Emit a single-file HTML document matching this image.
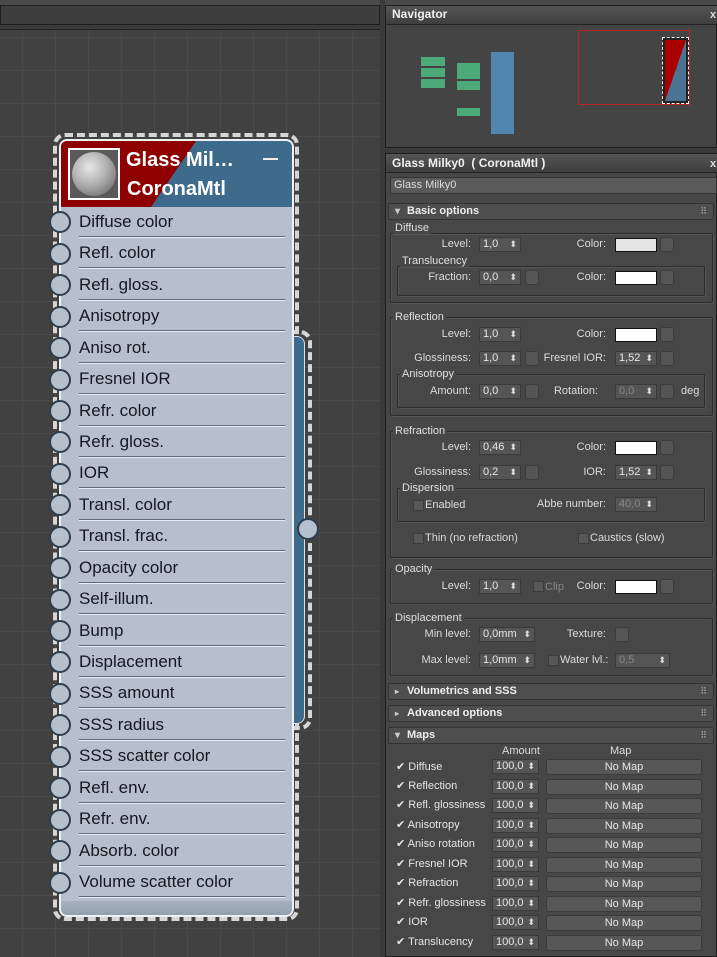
<!DOCTYPE html>
<html><head><meta charset="utf-8"><style>
*{margin:0;padding:0;box-sizing:border-box}
body{width:717px;height:957px;overflow:hidden;background:#3a3a3a;font-family:"Liberation Sans",Arial,sans-serif;position:relative}
.a{position:absolute}
.canvas{left:0;top:29px;width:380px;height:928px;background-color:#414141;border-top:1px solid #222;
background-image:linear-gradient(to right,#4a4a4a 1px,transparent 1px),linear-gradient(to bottom,#4a4a4a 1px,transparent 1px);
background-size:33px 33px;background-position:22px 7px}
.row{position:absolute;left:60px;width:232px;height:31px}
.row span{position:absolute;left:19px;top:5px;font-size:17px;color:#141820;line-height:20px}
.row i{position:absolute;left:19px;right:7px;bottom:0;height:2px;background:#5e6a78;border-bottom:1px solid #e8eef4}
.dot{position:absolute;width:22px;height:22px;border-radius:50%;background:#b4c0cc;border:2px solid #2e3e4e}
.t{position:absolute;font-size:11px;color:#dcdcdc;line-height:13px;white-space:nowrap}
.r{text-align:right}
.gb{position:absolute;border:1px solid #2c2c2c;box-shadow:inset 1px 1px 0 #555,1px 1px 0 #555;border-radius:2px}
.lg{position:absolute;font-size:11px;color:#e0e0e0;background:#474747;padding:0 2px;line-height:12px}
.sp{position:absolute;height:15px;background:#555;border:1px solid #3a3a3a;font-size:11px;color:#e6e6e6;line-height:13px;padding-left:3px}
.sp:after{content:"⬍";position:absolute;right:3px;top:0;font-size:9px;color:#ddd}
.dis{color:#888}
.sw{position:absolute;width:42px;height:14px;background:#fff;border:1px solid #111}
.bt{position:absolute;width:14px;height:15px;background:#555;border:1px solid #3c3c3c;border-radius:3px}
.cb{position:absolute;width:11px;height:11px;background:#575757;border:1px solid #3c3c3c}
.rh{position:absolute;left:388px;width:326px;height:17px;background:#4e4e4e;border:1px solid #333;border-radius:2px;font-size:11px;font-weight:bold;color:#eee;line-height:15px;padding-left:18px}
.rh:before{position:absolute;left:6px;font-size:8px;color:#ccc}
.rh.c:before{content:"▸"}
.rh.o:before{content:"▾";font-size:10px}
.rh:after{content:"⠿";position:absolute;right:6px;font-size:9px;color:#aaa;font-weight:normal}
.mb{position:absolute;left:546px;width:156px;height:16px;background:#575757;border:1px solid #3b3b3b;border-radius:3px;font-size:11px;color:#e6e6e6;text-align:center;line-height:14px}
.ck{position:absolute;left:396px;font-size:11px;color:#e6e6e6;line-height:13px}
</style></head><body>
<div class="a" style="left:0;top:0;width:717px;height:5px;background:#4a4a4a"></div>
<div class="a" style="left:0;top:5px;width:380px;height:20px;background:#3e3e3e;border:1px solid #1e1e1e"></div>
<div class="a canvas"></div>
<div class="a" style="left:380px;top:0;width:5px;height:957px;background:#3a3a3a"></div>

<!-- node -->
<div class="a" style="left:53px;top:133px;width:246px;height:788px;border:4px dashed #d6d6d6;border-radius:12px"></div>
<div class="a" style="left:290px;top:330px;width:22px;height:400px;border:4px dashed #d6d6d6;border-left:none;border-radius:0 12px 12px 0"></div>
<div class="a" style="left:293px;top:336px;width:12px;height:388px;background:#3e6a8c;border:1px solid #dde;border-left:none;border-radius:0 8px 8px 0"></div>
<div class="dot" style="left:297px;top:518px"></div>
<div class="a" style="left:59px;top:139px;width:235px;height:778px;background:#b6c0cc;border:2px solid #eef2f6;border-radius:8px;overflow:hidden">
 <div class="a" style="left:0;top:0;width:235px;height:66px;background:#3e6a8c"></div>
 <div class="a" style="left:0;top:0;width:235px;height:66px;background:#8e0000;clip-path:polygon(0 0,135px 0,90px 66px,0 66px)"></div>
 <div class="a" style="left:7px;top:7px;width:52px;height:52px;background:#fff;padding:2px"><div style="width:48px;height:48px;background:#5a5a5a;display:flex;align-items:center;justify-content:center"><div style="width:44px;height:44px;border-radius:50%;background:radial-gradient(circle at 40% 35%,#e8e8e8,#b0b0b0 45%,#777 80%,#555)"></div></div></div>
 <div class="a" style="left:65px;top:8px;font-size:20px;font-weight:bold;color:#fff">Glass Mil…</div>
 <div class="a" style="left:66px;top:37px;font-size:20px;font-weight:bold;color:#fff">CoronaMtl</div>
 <div class="a" style="left:202px;top:17px;width:15px;height:2px;background:#eee"></div>
 <div class="a" style="left:0;bottom:0;width:235px;height:14px;background:linear-gradient(#a8b2be,#94a0ae)"></div>
</div>
<div class="row" style="top:207px"><span>Diffuse color</span><i></i></div>
<div class="row" style="top:238px"><span>Refl. color</span><i></i></div>
<div class="row" style="top:270px"><span>Refl. gloss.</span><i></i></div>
<div class="row" style="top:301px"><span>Anisotropy</span><i></i></div>
<div class="row" style="top:333px"><span>Aniso rot.</span><i></i></div>
<div class="row" style="top:364px"><span>Fresnel IOR</span><i></i></div>
<div class="row" style="top:396px"><span>Refr. color</span><i></i></div>
<div class="row" style="top:427px"><span>Refr. gloss.</span><i></i></div>
<div class="row" style="top:458px"><span>IOR</span><i></i></div>
<div class="row" style="top:490px"><span>Transl. color</span><i></i></div>
<div class="row" style="top:521px"><span>Transl. frac.</span><i></i></div>
<div class="row" style="top:553px"><span>Opacity color</span><i></i></div>
<div class="row" style="top:584px"><span>Self-illum.</span><i></i></div>
<div class="row" style="top:616px"><span>Bump</span><i></i></div>
<div class="row" style="top:647px"><span>Displacement</span><i></i></div>
<div class="row" style="top:678px"><span>SSS amount</span><i></i></div>
<div class="row" style="top:710px"><span>SSS radius</span><i></i></div>
<div class="row" style="top:741px"><span>SSS scatter color</span><i></i></div>
<div class="row" style="top:773px"><span>Refl. env.</span><i></i></div>
<div class="row" style="top:804px"><span>Refr. env.</span><i></i></div>
<div class="row" style="top:836px"><span>Absorb. color</span><i></i></div>
<div class="row" style="top:867px"><span>Volume scatter color</span><i></i></div>
<div class="dot" style="left:49px;top:211px"></div><div class="dot" style="left:49px;top:243px"></div>
<div class="dot" style="left:49px;top:274px"></div><div class="dot" style="left:49px;top:306px"></div>
<div class="dot" style="left:49px;top:337px"></div><div class="dot" style="left:49px;top:369px"></div>
<div class="dot" style="left:49px;top:400px"></div><div class="dot" style="left:49px;top:431px"></div>
<div class="dot" style="left:49px;top:463px"></div><div class="dot" style="left:49px;top:494px"></div>
<div class="dot" style="left:49px;top:526px"></div><div class="dot" style="left:49px;top:557px"></div>
<div class="dot" style="left:49px;top:589px"></div><div class="dot" style="left:49px;top:620px"></div>
<div class="dot" style="left:49px;top:651px"></div><div class="dot" style="left:49px;top:683px"></div>
<div class="dot" style="left:49px;top:714px"></div><div class="dot" style="left:49px;top:746px"></div>
<div class="dot" style="left:49px;top:777px"></div><div class="dot" style="left:49px;top:809px"></div>
<div class="dot" style="left:49px;top:840px"></div><div class="dot" style="left:49px;top:872px"></div>

<!-- navigator -->
<div class="a" style="left:385px;top:5px;width:332px;height:143px;background:#444;border:1px solid #1e1e1e"></div>
<div class="a" style="left:386px;top:6px;width:331px;height:19px;background:linear-gradient(#555,#3e3e3e);border-bottom:1px solid #222"></div>
<div class="t" style="left:392px;top:8px;font-size:12px;font-weight:bold;color:#f0f0f0">Navigator</div>
<div class="t" style="left:710px;top:9px;font-weight:bold">x</div>
<div class="a" style="left:421px;top:57px;width:24px;height:9px;background:#4caa78"></div>
<div class="a" style="left:421px;top:68px;width:24px;height:9px;background:#4caa78"></div>
<div class="a" style="left:421px;top:79px;width:24px;height:9px;background:#4caa78"></div>
<div class="a" style="left:457px;top:63px;width:23px;height:16px;background:#4caa78"></div>
<div class="a" style="left:457px;top:81px;width:23px;height:9px;background:#4caa78"></div>
<div class="a" style="left:457px;top:108px;width:23px;height:8px;background:#4caa78"></div>
<div class="a" style="left:491px;top:52px;width:23px;height:82px;background:#5186b0"></div>
<div class="a" style="left:578px;top:30px;width:112px;height:75px;border:1px solid #b22"></div>
<div class="a" style="left:662px;top:37px;width:27px;height:67px;border:1px dashed #fff;padding:2px;background:#222"><div style="width:100%;height:100%;background:linear-gradient(to bottom right,#a00 0,#a00 50%,#4a7394 50%)"></div></div>

<!-- material panel -->
<div class="a" style="left:385px;top:153px;width:332px;height:804px;background:#474747;border:1px solid #1e1e1e"></div>
<div class="a" style="left:386px;top:154px;width:331px;height:19px;background:linear-gradient(#555,#3e3e3e);border-bottom:1px solid #222"></div>
<div class="t" style="left:392px;top:157px;font-size:12px;font-weight:bold;color:#f0f0f0">Glass Milky0 &nbsp;( CoronaMtl )</div>
<div class="t" style="left:710px;top:158px;font-weight:bold">x</div>
<div class="a" style="left:390px;top:177px;width:327px;height:17px;background:#5a5a5a;border:1px solid #333"></div>
<div class="t" style="left:394px;top:179px">Glass Milky0</div>
<div class="rh o" style="top:203px">Basic options</div>

<!-- Diffuse -->
<div class="gb" style="left:390px;top:233px;width:323px;height:70px"></div>
<div class="lg" style="left:393px;top:222px">Diffuse</div>
<div class="t r" style="left:400px;top:238px;width:71px">Level:</div>
<div class="sp" style="left:479px;top:237px;width:42px">1,0</div>
<div class="t r" style="left:540px;top:238px;width:66px">Color:</div>
<div class="sw" style="left:615px;top:238px;background:#e4e4e4"></div><div class="bt" style="left:660px;top:237px"></div>
<div class="gb" style="left:397px;top:266px;width:308px;height:30px"></div>
<div class="lg" style="left:400px;top:255px">Translucency</div>
<div class="t r" style="left:400px;top:271px;width:71px">Fraction:</div>
<div class="sp" style="left:479px;top:270px;width:42px">0,0</div><div class="bt" style="left:525px;top:270px"></div>
<div class="t r" style="left:540px;top:271px;width:66px">Color:</div>
<div class="sw" style="left:615px;top:271px"></div><div class="bt" style="left:660px;top:270px"></div>

<!-- Reflection -->
<div class="gb" style="left:390px;top:317px;width:323px;height:99px"></div>
<div class="lg" style="left:393px;top:311px">Reflection</div>
<div class="t r" style="left:400px;top:328px;width:71px">Level:</div>
<div class="sp" style="left:479px;top:327px;width:42px">1,0</div>
<div class="t r" style="left:540px;top:328px;width:66px">Color:</div>
<div class="sw" style="left:615px;top:328px"></div><div class="bt" style="left:660px;top:327px"></div>
<div class="t r" style="left:400px;top:352px;width:71px">Glossiness:</div>
<div class="sp" style="left:479px;top:351px;width:42px">1,0</div><div class="bt" style="left:525px;top:351px"></div>
<div class="t r" style="left:530px;top:352px;width:76px">Fresnel IOR:</div>
<div class="sp" style="left:615px;top:351px;width:42px">1,52</div><div class="bt" style="left:660px;top:351px"></div>
<div class="gb" style="left:397px;top:374px;width:308px;height:34px"></div>
<div class="lg" style="left:400px;top:368px">Anisotropy</div>
<div class="t r" style="left:400px;top:385px;width:71px">Amount:</div>
<div class="sp" style="left:479px;top:384px;width:42px">0,0</div><div class="bt" style="left:525px;top:384px"></div>
<div class="t r" style="left:530px;top:385px;width:68px">Rotation:</div>
<div class="sp dis" style="left:615px;top:384px;width:42px">0,0</div><div class="bt" style="left:660px;top:384px"></div>
<div class="t" style="left:681px;top:385px">deg</div>

<!-- Refraction -->
<div class="gb" style="left:390px;top:431px;width:323px;height:127px"></div>
<div class="lg" style="left:393px;top:425px">Refraction</div>
<div class="t r" style="left:400px;top:441px;width:71px">Level:</div>
<div class="sp" style="left:479px;top:440px;width:42px">0,46</div>
<div class="t r" style="left:540px;top:441px;width:66px">Color:</div>
<div class="sw" style="left:615px;top:441px"></div><div class="bt" style="left:660px;top:440px"></div>
<div class="t r" style="left:400px;top:466px;width:71px">Glossiness:</div>
<div class="sp" style="left:479px;top:465px;width:42px">0,2</div><div class="bt" style="left:525px;top:465px"></div>
<div class="t r" style="left:540px;top:466px;width:66px">IOR:</div>
<div class="sp" style="left:615px;top:465px;width:42px">1,52</div><div class="bt" style="left:660px;top:465px"></div>
<div class="gb" style="left:397px;top:488px;width:308px;height:34px"></div>
<div class="lg" style="left:400px;top:482px">Dispersion</div>
<div class="cb" style="left:413px;top:500px"></div><div class="t" style="left:425px;top:499px">Enabled</div>
<div class="t r" style="left:520px;top:498px;width:86px">Abbe number:</div>
<div class="sp dis" style="left:615px;top:497px;width:42px">40,0</div>
<div class="cb" style="left:413px;top:533px"></div><div class="t" style="left:425px;top:532px">Thin (no refraction)</div>
<div class="cb" style="left:578px;top:533px"></div><div class="t" style="left:590px;top:532px">Caustics (slow)</div>

<!-- Opacity -->
<div class="gb" style="left:390px;top:569px;width:323px;height:35px"></div>
<div class="lg" style="left:393px;top:563px">Opacity</div>
<div class="t r" style="left:400px;top:580px;width:71px">Level:</div>
<div class="sp" style="left:479px;top:579px;width:42px">1,0</div>
<div class="cb" style="left:533px;top:581px"></div><div class="t" style="left:545px;top:581px;color:#888">Clip</div>
<div class="t r" style="left:540px;top:580px;width:66px">Color:</div>
<div class="sw" style="left:615px;top:580px"></div><div class="bt" style="left:660px;top:579px"></div>

<!-- Displacement -->
<div class="gb" style="left:390px;top:618px;width:323px;height:58px"></div>
<div class="lg" style="left:393px;top:612px">Displacement</div>
<div class="t r" style="left:400px;top:628px;width:71px">Min level:</div>
<div class="sp" style="left:479px;top:627px;width:56px">0,0mm</div>
<div class="t r" style="left:540px;top:628px;width:66px">Texture:</div>
<div class="bt" style="left:615px;top:627px"></div>
<div class="t r" style="left:400px;top:654px;width:71px">Max level:</div>
<div class="sp" style="left:479px;top:653px;width:56px">1,0mm</div>
<div class="cb" style="left:548px;top:655px"></div><div class="t" style="left:560px;top:654px">Water lvl.:</div>
<div class="sp dis" style="left:615px;top:653px;width:55px">0,5</div>

<div class="rh c" style="top:683px">Volumetrics and SSS</div>
<div class="rh c" style="top:705px">Advanced options</div>
<div class="rh o" style="top:727px">Maps</div>
<div class="t" style="left:502px;top:745px">Amount</div>
<div class="t" style="left:610px;top:745px">Map</div>

<div class="ck" style="top:761px">✔ Diffuse</div><div class="sp" style="left:492px;top:759px;width:47px">100,0</div><div class="mb" style="top:759px">No Map</div>
<div class="ck" style="top:780px">✔ Reflection</div><div class="sp" style="left:492px;top:779px;width:47px">100,0</div><div class="mb" style="top:779px">No Map</div>
<div class="ck" style="top:799px">✔ Refl. glossiness</div><div class="sp" style="left:492px;top:798px;width:47px">100,0</div><div class="mb" style="top:798px">No Map</div>
<div class="ck" style="top:819px">✔ Anisotropy</div><div class="sp" style="left:492px;top:818px;width:47px">100,0</div><div class="mb" style="top:818px">No Map</div>
<div class="ck" style="top:838px">✔ Aniso rotation</div><div class="sp" style="left:492px;top:837px;width:47px">100,0</div><div class="mb" style="top:837px">No Map</div>
<div class="ck" style="top:858px">✔ Fresnel IOR</div><div class="sp" style="left:492px;top:857px;width:47px">100,0</div><div class="mb" style="top:857px">No Map</div>
<div class="ck" style="top:877px">✔ Refraction</div><div class="sp" style="left:492px;top:876px;width:47px">100,0</div><div class="mb" style="top:876px">No Map</div>
<div class="ck" style="top:897px">✔ Refr. glossiness</div><div class="sp" style="left:492px;top:896px;width:47px">100,0</div><div class="mb" style="top:896px">No Map</div>
<div class="ck" style="top:916px">✔ IOR</div><div class="sp" style="left:492px;top:915px;width:47px">100,0</div><div class="mb" style="top:915px">No Map</div>
<div class="ck" style="top:936px">✔ Translucency</div><div class="sp" style="left:492px;top:935px;width:47px">100,0</div><div class="mb" style="top:935px">No Map</div>
</body></html>
